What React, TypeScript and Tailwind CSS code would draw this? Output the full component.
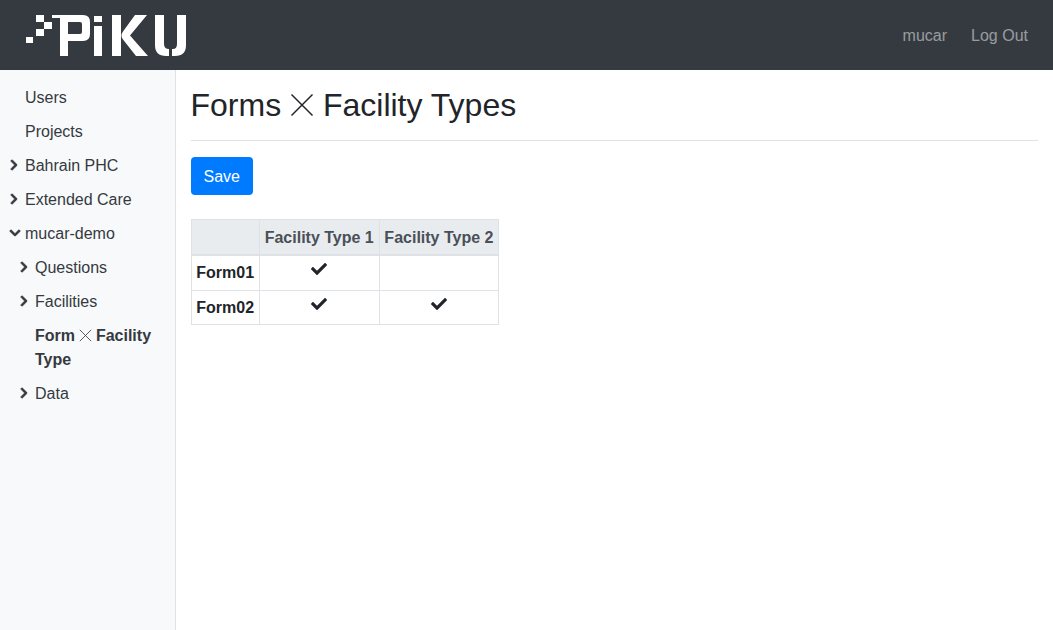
import { FaCheck, FaChevronDown, FaChevronRight } from "react-icons/fa";

function Times({ s, className = "" }: { s: number; className?: string }) {
  return (
    <svg width={s} height={s} viewBox="0 0 16 16" fill="none" stroke="currentColor" strokeWidth="1" className={`inline-block align-[-1px] ${className}`}>
      <path d="M1 1L15 15M15 1L1 15" />
    </svg>
  );
}

function Logo() {
  return (
    <svg width="162" height="44" viewBox="0 0 162 44" fill="#fff">
      <rect x="1" y="24" width="7" height="6" />
      <rect x="11" y="16" width="8" height="7" />
      <rect x="19" y="9" width="8" height="7" />
      <rect x="11" y="2" width="8" height="7" />
      <path fillRule="evenodd" d="M27 2H58Q65 2 65 9V21Q65 28 58 28H43V43H35V5H27Z M43 9V21H55Q57 21 57 19V11Q57 9 55 9Z" />
      <rect x="69" y="3" width="8" height="6" />
      <rect x="69" y="13" width="8" height="30" />
      <rect x="87" y="2" width="9" height="41" />
      <path d="M110 2H122L105 22.5L123 43H111L98 26.5Q95 22.5 98 18.5Z" />
      <path d="M130 2H139V31Q139 36 144 36V43H141Q130 43 130 32Z" />
      <path d="M152 2H161V32Q161 43 150 43H147V36H148Q152 36 152 31Z" />
    </svg>
  );
}

function Item({ icon, indent, children }: { icon?: "r" | "d"; indent?: boolean; children: React.ReactNode }) {
  return (
    <div className={`relative py-[5px] leading-6 ${indent ? "pl-[35px]" : "pl-[25px]"}`}>
      {icon && (
        <span className={`absolute top-[10px] ${indent ? "left-[18px]" : "left-[8px]"}`}>
          {icon === "r" ? (
            <FaChevronRight size={12} stroke="currentColor" strokeWidth={36} />
          ) : (
            <FaChevronDown size={12} stroke="currentColor" strokeWidth={36} className="ml-[1px]" />
          )}
        </span>
      )}
      {children}
    </div>
  );
}

export default function App() {
  return (
    <div className="h-[630px] flex flex-col overflow-hidden bg-white text-[#212529] text-base font-['Liberation_Sans',Arial,sans-serif]">
      <header className="h-[70px] shrink-0 bg-[#343a40] flex items-center justify-between pl-[25px] pr-[25px]">
        <Logo />
        <nav className="flex gap-6 pt-[2px] text-[rgba(255,255,255,0.5)]">
          <span>mucar</span>
          <span>Log Out</span>
        </nav>
      </header>
      <div className="flex flex-1 min-h-0">
        <aside className="w-[175.5px] shrink-0 bg-[#f8f9fa] border-r border-[#dee2e6] pt-[11px] text-[#343a40]">
          <Item>Users</Item>
          <Item>Projects</Item>
          <Item icon="r">Bahrain PHC</Item>
          <Item icon="r">Extended Care</Item>
          <Item icon="d">mucar-demo</Item>
          <Item icon="r" indent>Questions</Item>
          <Item icon="r" indent>Facilities</Item>
          <Item indent>
            <b>Form <Times s={13} className="-mr-[1px]" /> Facility Type</b>
          </Item>
          <Item icon="r" indent>Data</Item>
        </aside>
        <main className="flex-1 px-[15px] pt-[15px]">
          <div className="border-b border-[#dee2e6] pb-[15px] mb-4">
            <h1 className="text-[32px] leading-[40px] font-normal">
              Forms <Times s={24} /> Facility Types
            </h1>
          </div>
          <button className="h-[38px] px-[13px] pt-[2px] bg-[#007bff] text-white rounded">Save</button>
          <table className="mt-[24.45px] border-collapse leading-6">
            <thead>
              <tr className="bg-[#e9ecef] text-[#495057]">
                <th className="border border-[#dee2e6] border-b-2 p-[4.8px]"></th>
                <th className="border border-[#dee2e6] border-b-2 pt-[5.4px] pb-[4.2px] px-[4.8px] font-bold">Facility Type 1</th>
                <th className="border border-[#dee2e6] border-b-2 pt-[5.4px] pb-[4.2px] px-[4.8px] font-bold">Facility Type 2</th>
              </tr>
            </thead>
            <tbody>
              <tr>
                <th className="border border-[#dee2e6] p-[4.8px] font-bold">Form01</th>
                <td className="border border-[#dee2e6] p-[4.8px] text-center">
                  <FaCheck size={16} className="mx-auto -mt-[7px]" />
                </td>
                <td className="border border-[#dee2e6] p-[4.8px] text-center"></td>
              </tr>
              <tr>
                <th className="border border-[#dee2e6] pt-[5.4px] pb-[4.2px] px-[4.8px] font-bold">Form02</th>
                <td className="border border-[#dee2e6] p-[4.8px] text-center">
                  <FaCheck size={16} className="mx-auto -mt-[7px]" />
                </td>
                <td className="border border-[#dee2e6] p-[4.8px] text-center">
                  <FaCheck size={16} className="mx-auto -mt-[7px]" />
                </td>
              </tr>
            </tbody>
          </table>
        </main>
      </div>
    </div>
  );
}
